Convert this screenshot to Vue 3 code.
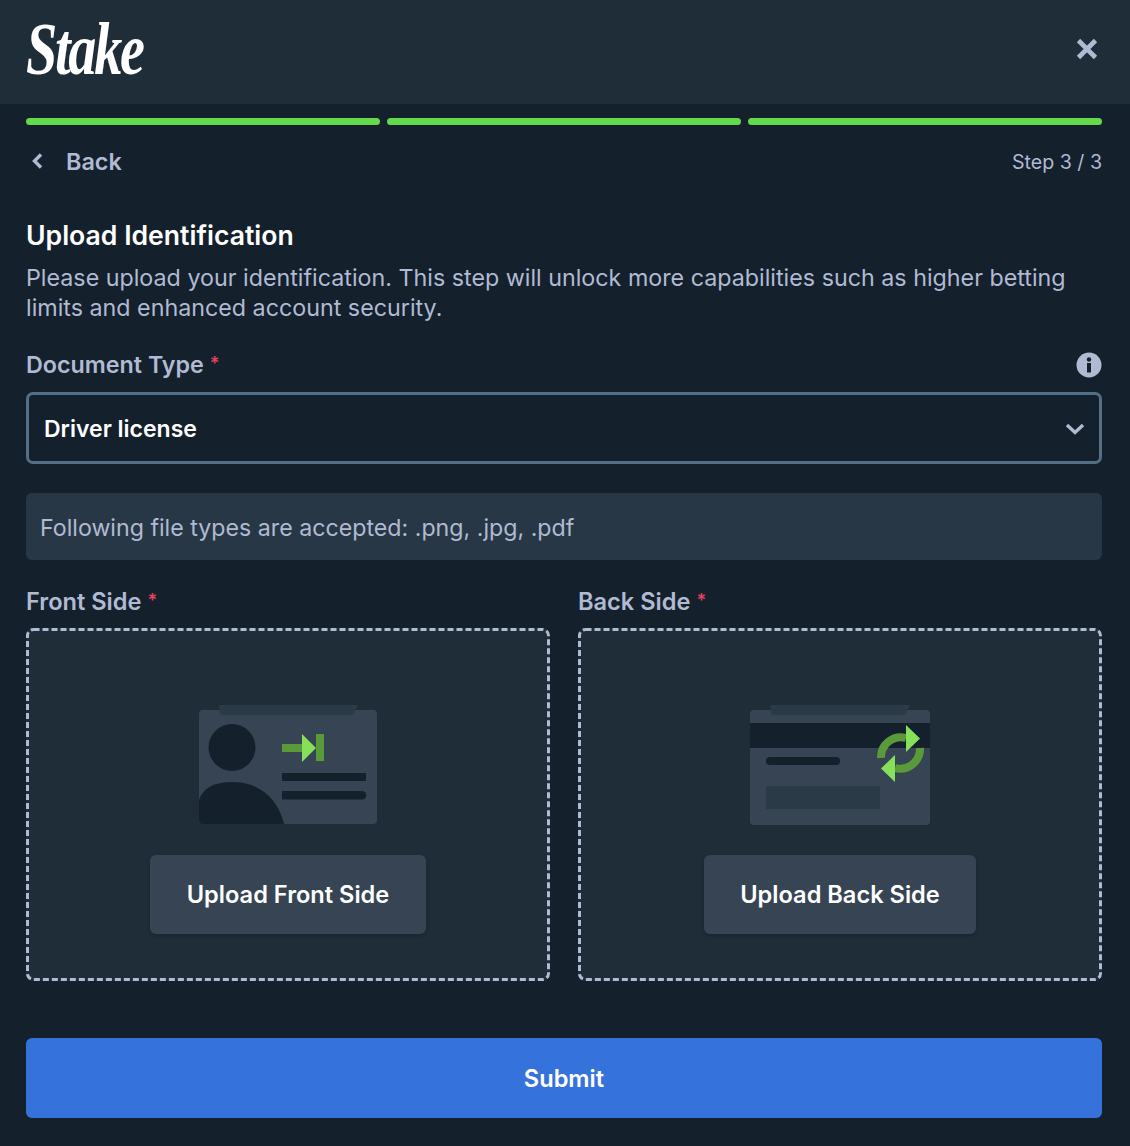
<template>
  <div class="page">
    <header class="top">
      <span class="logo">Stake</span>
      <button class="close" aria-label="Close">
        <svg width="24" height="24" viewBox="0 0 24 24"><path d="M3.5 3.5 20.5 20.5M20.5 3.5 3.5 20.5" stroke="#b1bad3" stroke-width="4.6" fill="none"/></svg>
      </button>
    </header>

    <main class="content">
      <div class="progress">
        <div class="bar" v-for="n in 3" :key="n"></div>
      </div>

      <div class="nav">
        <span class="back">
          <svg width="12" height="16" viewBox="0 0 12 16"><path d="M10 1.500 3.500 8l6.500 6.500" stroke="#b1bad3" stroke-width="3.400" fill="none"/></svg>
          Back
        </span>
        <span class="step">Step 3 / 3</span>
      </div>

      <h1>Upload Identification</h1>
      <p class="intro">Please upload your identification. This step will unlock more capabilities such as higher betting limits and enhanced account security.</p>

      <div class="label_row">
        <label>Document Type <i>*</i></label>
        <svg width="26" height="26" viewBox="0 0 26 26">
          <circle cx="13" cy="13" r="12.500" fill="#b1bad3"/>
          <circle cx="13" cy="7.500" r="2.200" fill="#14202c"/>
          <rect x="11" y="11" width="4" height="9.500" fill="#14202c"/>
        </svg>
      </div>
      <div class="select">
        <span>Driver license</span>
        <svg width="20" height="14" viewBox="0 0 20 14"><path d="M2 3l8 7.500L18 3" stroke="#b1bad3" stroke-width="3.400" fill="none"/></svg>
      </div>

      <div class="notice">Following file types are accepted: .png, .jpg, .pdf</div>

      <div class="uploads">
        <div class="side">
          <label>Front Side <i>*</i></label>
          <div class="drop">
            <svg class="dashes" width="524" height="353"><rect x="1.500" y="1.500" width="521" height="350" rx="6"/></svg>
            <svg class="art" width="180" height="122" viewBox="198 704 180 122">
              <rect x="199" y="710" width="178" height="114" rx="4" fill="#364454"/>
              <path d="M219 705h139l-4 8q-1 2-3 2H223q-2 0-3-2z" fill="#2b3a47"/>
              <circle cx="232" cy="747.500" r="23.500" fill="#14202c"/>
              <path d="M199 800q6-18 33-18c27 0 46 16 52 42h-81q-4 0-4-4z" fill="#14202c"/>
              <rect x="282" y="744" width="21" height="8" fill="#5a9a3a"/>
              <path d="M302 734l14 14-14 14z" fill="#86e05a"/>
              <rect x="316" y="734" width="8" height="27" fill="#5a9a3a"/>
              <rect x="282" y="773" width="84" height="8" fill="#14202c"/>
              <path d="M282 791h80a4 4 0 0 1 0 8.500h-80z" fill="#14202c"/>
            </svg>
            <button class="upload">Upload Front Side</button>
          </div>
        </div>
        <div class="side">
          <label>Back Side <i>*</i></label>
          <div class="drop">
            <svg class="dashes" width="524" height="353"><rect x="1.500" y="1.500" width="521" height="350" rx="6"/></svg>
            <svg class="art" width="182" height="122" viewBox="749 704 182 122">
              <rect x="750" y="710" width="180" height="115" rx="4" fill="#364454"/>
              <path d="M770 705h140l-4 8q-1 2-3 2H774q-2 0-3-2z" fill="#2b3a47"/>
              <rect x="750" y="723" width="180" height="25" fill="#14202c"/>
              <rect x="766" y="757" width="74" height="8" rx="4" fill="#14202c"/>
              <rect x="766" y="786" width="114" height="23" fill="#2b3a47"/>
              <path d="M881 758a20 20 0 0 1 25-20" stroke="#5a9a3a" stroke-width="8" fill="none"/>
              <path d="M920 748a20 20 0 0 1-25 20" stroke="#5a9a3a" stroke-width="8" fill="none"/>
              <path d="M906 725l14 13.500-14 13.500z" fill="#86e05a"/>
              <path d="M895 755l-14 13.500 14 13.500z" fill="#86e05a"/>
            </svg>
            <button class="upload">Upload Back Side</button>
          </div>
        </div>
      </div>

      <button class="submit">Submit</button>
    </main>
  </div>
</template>

<script setup>
</script>

<style scoped>
.page {
  width: 1130px;
  height: 1146px;
  background: #14202c;
  font-family: Inter, "Noto Sans", sans-serif;
  color: #b1bad3;
}

.top {
  height: 104px;
  background: #1f2d39;
  display: flex;
  align-items: center;
  justify-content: space-between;
  padding: 0 31px 6px 26px;
  box-sizing: border-box;
}

.logo {
  display: inline-block;
  font-family: "Liberation Serif", serif;
  font-style: italic;
  font-weight: 700;
  font-size: 74px;
  letter-spacing: -3px;
  color: #fff;
  transform: scaleX(0.76);
  transform-origin: left center;
}

.close {
  background: none;
  border: 0;
  padding: 0;
  display: flex;
}

.content {
  padding: 14px 28px 0 26px;
}

.progress {
  display: flex;
  gap: 7px;
}

.bar {
  flex: 1;
  height: 7px;
  border-radius: 4px;
  background: #64d94a;
}

.nav {
  display: flex;
  justify-content: space-between;
  align-items: center;
  margin-top: 22px;
  height: 30px;
}

.back {
  display: flex;
  align-items: center;
  gap: 23px;
  padding-bottom: 2px;
  font-size: 23.400px;
  font-weight: 600;
}

.back svg {
  margin-left: 5px;
}

.step {
  font-size: 19.600px;
}

h1 {
  margin: 42px 0 0;
  font-size: 26.600px;
  line-height: 32px;
  font-weight: 600;
  color: #fff;
}

.intro {
  margin: 12px 0 0;
  font-size: 23.270px;
  line-height: 30px;
}

.label_row {
  display: flex;
  justify-content: space-between;
  align-items: center;
  margin-top: 26px;
}

label {
  font-size: 23.300px;
  line-height: 30px;
  font-weight: 600;
}

label i {
  color: #e0425f;
  font-style: normal;
  font-size: 18px;
  vertical-align: 3px;
}

.select {
  margin-top: 12px;
  height: 72px;
  box-sizing: border-box;
  border: 3px solid #557086;
  border-radius: 7px;
  display: flex;
  align-items: center;
  justify-content: space-between;
  padding: 1px 14px 0 15px;
  color: #fff;
  font-size: 23px;
  font-weight: 600;
}

.notice {
  margin-top: 29px;
  height: 67px;
  box-sizing: border-box;
  background: #283745;
  border-radius: 6px;
  display: flex;
  align-items: center;
  padding: 2px 0 0 14px;
  font-size: 23.200px;
}

.uploads {
  display: flex;
  gap: 28px;
  margin-top: 26px;
}

.side {
  flex: 1;
}

.side label {
  font-size: 23.600px;
}

.drop {
  position: relative;
  margin-top: 11px;
  height: 353px;
  box-sizing: border-box;
  background: #1f2d39;
  border-radius: 7px;
  display: flex;
  flex-direction: column;
  align-items: center;
  padding-top: 76px;
}

.dashes {
  position: absolute;
  top: 0;
  left: 0;
}

.dashes rect {
  fill: none;
  stroke: #b1bad3;
  stroke-width: 3;
  stroke-dasharray: 6 3;
}

.upload {
  margin-top: 29px;
  height: 79px;
  padding: 0 36.500px;
  background: #364454;
  color: #fff;
  border: 0;
  border-radius: 6px;
  font: 600 23.600px Inter, "Noto Sans", sans-serif;
  box-shadow: 0 2px 4px rgba(0, 0, 0, 0.2);
}

.submit {
  display: block;
  width: 100%;
  height: 80px;
  margin-top: 57px;
  background: #3572db;
  color: #fff;
  border: 0;
  border-radius: 6px;
  font: 600 23.600px Inter, "Noto Sans", sans-serif;
}
</style>

<style>
body {
  background: #14202c;
}
</style>
